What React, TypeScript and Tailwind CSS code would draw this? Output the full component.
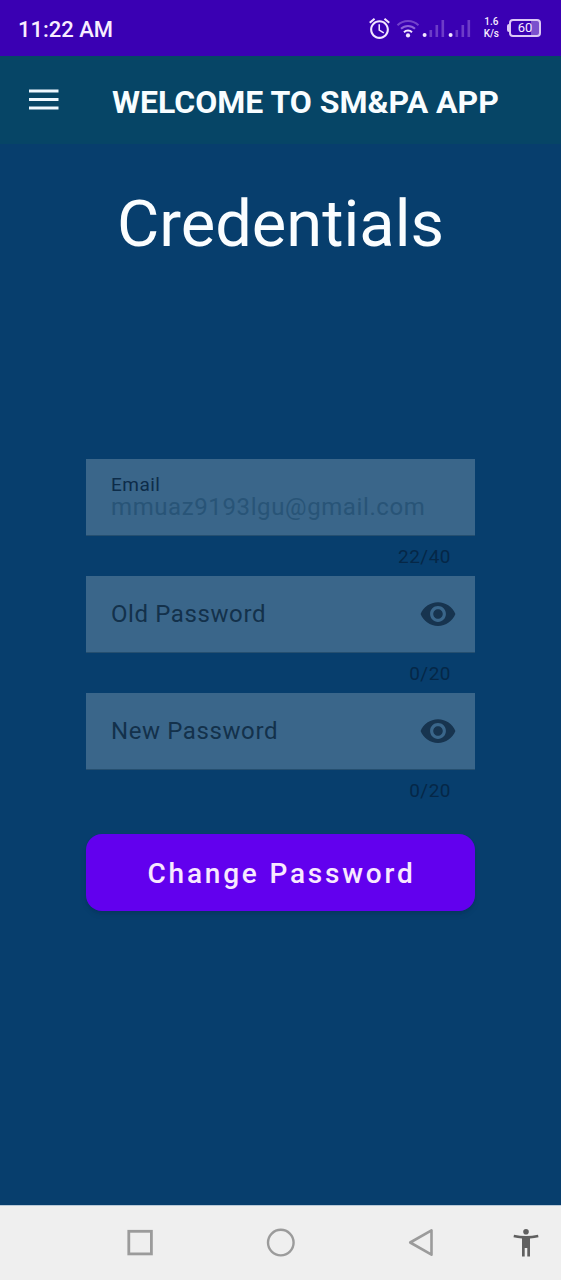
import { useState } from "react";

const EYE_PATH =
  "M12 4.5C7 4.5 2.73 7.61 1 12c1.73 4.39 6 7.5 11 7.5s9.27-3.11 11-7.5c-1.73-4.39-6-7.5-11-7.5zM12 17c-2.76 0-5-2.24-5-5s2.24-5 5-5 5 2.24 5 5-2.24 5-5 5zm0-8c-1.66 0-3 1.34-3 3s1.34 3 3 3 3-1.34 3-3-1.34-3-3-3z";

function AlarmIcon() {
  return (
    <svg className="h-[25px] w-[25px]" viewBox="0 0 24 24" fill="#f3e6ff" aria-hidden="true">
      <path d="M22 5.72l-4.6-3.86-1.29 1.53 4.6 3.86L22 5.72zM7.88 3.39L6.6 1.86 2 5.71l1.29 1.53 4.59-3.85zM12.5 8H11v6l4.75 2.85.75-1.23-4-2.37V8zM12 4c-4.97 0-9 4.03-9 9s4.02 9 9 9c4.97 0 9-4.03 9-9s-4.03-9-9-9zm0 16c-3.87 0-7-3.13-7-7s3.13-7 7-7 7 3.13 7 7-3.13 7-7 7z" />
    </svg>
  );
}

function WifiIcon() {
  return (
    <svg className="h-5 w-6" viewBox="0 0 24 20" fill="none" strokeWidth="2" aria-hidden="true">
      <path d="M1.5 7.2a15 15 0 0 1 21 0" stroke="#7342cb" />
      <path d="M5 10.8a10 10 0 0 1 14 0" stroke="#8d62d8" />
      <path d="M8 14.2a5.8 5.8 0 0 1 8 0" stroke="#f3e6ff" />
      <circle cx="12" cy="17.4" r="2.1" fill="#f3e6ff" />
    </svg>
  );
}

function SignalIcon() {
  return (
    <svg className="h-5 w-6" viewBox="0 0 24 20" fill="#6d3cc8" aria-hidden="true">
      <circle cx="2.6" cy="17" r="2" fill="#f3e6ff" />
      <rect x="7.500" y="12" width="2.600" height="7" />
      <rect x="13.500" y="7" width="2.600" height="12" />
      <rect x="19.500" y="2" width="2.600" height="17" />
    </svg>
  );
}

function StatusBar() {
  return (
    <div className="flex h-14 items-center justify-between bg-[#3a00b3] pr-5 pl-[18px] text-[#f8edff]">
      <span className="pt-1 text-[22px] leading-6 font-medium">11:22 AM</span>
      <div className="flex items-center">
        <AlarmIcon />
        <div className="ml-1 flex items-center">
          <WifiIcon />
        </div>
        <div className="ml-0.5 flex gap-0.5">
          <SignalIcon />
          <SignalIcon />
        </div>
        <div className="ml-3 text-center text-[10px] leading-3 font-medium">
          <div>1.6</div>
          <div>K/s</div>
        </div>
        <div className="ml-2 flex items-center">
          <div className="h-2 w-0.5 rounded-l-sm bg-[#dcc8f5]" />
          <div className="flex h-[18px] w-8 items-center justify-center rounded-sm border-2 border-[#dcc8f5] bg-linear-to-r from-[#3a00b3] from-70% to-[#7b50cd] to-70% text-[13px] leading-3">
            60
          </div>
        </div>
      </div>
    </div>
  );
}

function AppBar() {
  return (
    <header className="flex h-[88px] items-center bg-[#064566] pl-7">
      <button type="button" aria-label="Open menu" className="flex h-8 w-8 items-center justify-center">
        <svg className="h-6 w-8" viewBox="0 0 32 24" fill="#eef8ff" aria-hidden="true">
          <path d="M1 1.500h29.500v3H1zM1 10h29.500v3H1zM1 18.500h29.500v3H1z" />
        </svg>
      </button>
      <h1 className="ml-[52px] pt-1 text-[32px] leading-10 font-bold whitespace-nowrap text-[#f8fdff]">
        WELCOME TO SM&amp;PA APP
      </h1>
    </header>
  );
}

function Counter({ value, max }: { value: number; max: number }) {
  return (
    <div className="h-10 pt-2 pr-6 text-right text-[19px] leading-[26px] tracking-wide text-[#052747]">
      {value}/{max}
    </div>
  );
}

function EmailField() {
  const email = "mmuaz9193lgu@gmail.com";
  return (
    <div>
      <div className="h-[77px] border-b border-[#254f70] bg-[#3a668a] px-[25px] pt-4">
        <label htmlFor="email" className="block text-[19px] leading-5 tracking-wide text-[#0d2c49]">
          Email
        </label>
        <input
          id="email"
          type="email"
          readOnly
          value={email}
          className="-mt-1 block h-8 w-full bg-transparent text-[24px] leading-8 tracking-wide text-[#285477] outline-none"
        />
      </div>
      <Counter value={email.length} max={40} />
    </div>
  );
}

function PasswordField({ id, label }: { id: string; label: string }) {
  const [value, setValue] = useState("");
  const [visible, setVisible] = useState(false);
  return (
    <div>
      <div className="relative flex h-[77px] items-center border-b border-[#254f70] bg-[#3a668a] pr-[18px] pl-[25px]">
        <label
          htmlFor={id}
          className={
            value
              ? "pointer-events-none absolute top-1 left-[25px] text-[19px] leading-5 tracking-wide text-[#13314b]"
              : "pointer-events-none absolute inset-y-0 left-[25px] flex items-center text-[24px] leading-8 tracking-wide text-[#13314b]"
          }
        >
          {label}
        </label>
        <input
          id={id}
          type={visible ? "text" : "password"}
          maxLength={20}
          value={value}
          onChange={(e) => setValue(e.target.value)}
          className="h-10 min-w-0 flex-1 bg-transparent text-[24px] leading-8 tracking-wide text-[#13314b] outline-none"
        />
        <button
          type="button"
          aria-label="Toggle password visibility"
          onClick={() => setVisible(!visible)}
          className="flex h-10 items-center"
        >
          <svg className="h-[38px] w-[38px]" viewBox="0 0 24 24" fill="#17344f" aria-hidden="true">
            <path d={EYE_PATH} />
          </svg>
        </button>
      </div>
      <Counter value={value.length} max={20} />
    </div>
  );
}

function NavigationBar() {
  return (
    <nav className="flex h-[75px] items-center border-t border-[#b9cad8] bg-[#efefef]">
      <div className="w-1/8" />
      <button type="button" aria-label="Recent apps" className="flex w-1/4 justify-center">
        <svg className="h-8 w-8" viewBox="0 0 32 32" fill="none" stroke="#9b9b9b" strokeWidth="2.8" aria-hidden="true">
          <rect x="4.8" y="4.3" width="22.6" height="22.6" />
        </svg>
      </button>
      <button type="button" aria-label="Home" className="flex w-1/4 justify-center">
        <svg className="h-8 w-8" viewBox="0 0 32 32" fill="none" stroke="#9b9b9b" strokeWidth="2.4" aria-hidden="true">
          <circle cx="15.8" cy="15.600" r="12.8" />
        </svg>
      </button>
      <button type="button" aria-label="Back" className="flex w-1/4 justify-center">
        <svg className="h-8 w-8" viewBox="0 0 32 32" fill="none" stroke="#9b9b9b" strokeWidth="2.6" strokeLinejoin="round" aria-hidden="true">
          <path d="M26.500 3.300v24.400L5.200 15.500z" />
        </svg>
      </button>
      <button type="button" aria-label="Accessibility" className="flex w-1/8 justify-center">
        <svg className="h-8 w-8" viewBox="0 0 32 32" fill="#606060" aria-hidden="true">
          <circle cx="16" cy="4.800" r="2.800" />
          <path d="M4 7.800q12 2.400 24 0l.5 2.500q-4 1-8.500 1.300V29.600h-2.700v-8.500h-2.600v8.500H12V11.600q-4.500-.3-8.500-1.300z" />
        </svg>
      </button>
    </nav>
  );
}

export default function App() {
  return (
    <div className="flex min-h-screen flex-col bg-[#073e6d] font-[Roboto,sans-serif]">
      <StatusBar />
      <AppBar />
      <main className="flex-1 px-[86px] pt-10 pb-12">
        <h2 className="text-center text-[65px] leading-20 text-[#fafdff]">Credentials</h2>
        <form className="mt-[195px]" onSubmit={(e) => e.preventDefault()}>
          <EmailField />
          <PasswordField id="old-password" label="Old Password" />
          <PasswordField id="new-password" label="New Password" />
          <button
            type="submit"
            className="mt-6 h-[77px] w-full rounded-2xl bg-[#6200ee] pt-0.5 pl-0.5 text-[28px] leading-8 font-medium tracking-widest text-[#f8e8ff] shadow-md"
          >
            Change Password
          </button>
        </form>
      </main>
      <NavigationBar />
    </div>
  );
}
